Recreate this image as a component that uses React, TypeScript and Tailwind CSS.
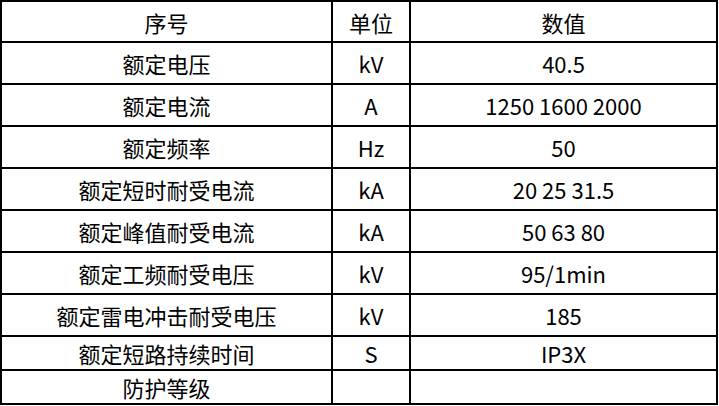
const rows: { name: string; unit: string; value: string; h: string }[] = [
  { name: "序号", unit: "单位", value: "数值", h: "h-[41px]" },
  { name: "额定电压", unit: "kV", value: "40.5", h: "h-[42px]" },
  { name: "额定电流", unit: "A", value: "1250 1600 2000", h: "h-[42px]" },
  { name: "额定频率", unit: "Hz", value: "50", h: "h-[42px]" },
  { name: "额定短时耐受电流", unit: "kA", value: "20 25 31.5", h: "h-[42px]" },
  { name: "额定峰值耐受电流", unit: "kA", value: "50 63 80", h: "h-[42px]" },
  { name: "额定工频耐受电压", unit: "kV", value: "95/1min", h: "h-[42px]" },
  { name: "额定雷电冲击耐受电压", unit: "kV", value: "185", h: "h-[42px]" },
  { name: "额定短路持续时间", unit: "S", value: "IP3X", h: "h-[34px]" },
  { name: "防护等级", unit: "", value: "", h: "h-[34px]" },
]

export default function App() {
  return (
    <div className="h-[406px] w-[719px] overflow-hidden bg-white font-['Noto_Sans_CJK_SC',sans-serif] text-[22px] leading-none text-black">
      <div className="w-[718px] border-l-2 border-t-2 border-black">
        {rows.map((r, i) => (
          <div key={i} className={`flex ${r.h}`}>
            <div className="flex w-[331px] items-center justify-center border-b-2 border-r-2 border-black">{r.name}</div>
            <div className="flex w-[78px] items-center justify-center border-b-2 border-r-2 border-black">{r.unit}</div>
            <div className="flex w-[307px] items-center justify-center border-b-2 border-r-2 border-black">{r.value}</div>
          </div>
        ))}
      </div>
    </div>
  )
}
